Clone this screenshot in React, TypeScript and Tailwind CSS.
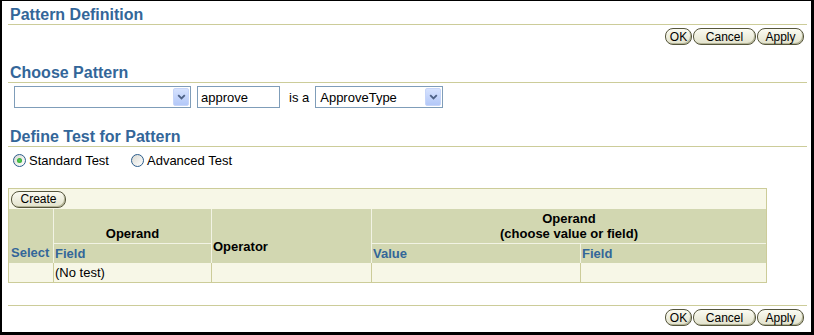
import React from "react";

function Btn({ label, className }: { label: string; className: string }) {
  return (
    <div
      className={
        "h-[17px] flex items-center justify-center rounded-[8px] border border-[#55553c] bg-[linear-gradient(#fbfbf2,#e2e2cc)] text-[12px] leading-none text-black shadow-[inset_-1px_-1px_0_#b4b496] " +
        className
      }
    >
      {label}
    </div>
  );
}

function Heading({ children, className }: { children: React.ReactNode; className: string }) {
  return (
    <div
      className={
        "pl-[2px] text-[16px] leading-[18px] font-bold text-[#336699] border-b border-[#cccc99] " +
        className
      }
    >
      {children}
    </div>
  );
}

function ComboArrow() {
  return (
    <div className="w-[16px] h-[18px] rounded-[2px] border border-[#c6d5f9] bg-[linear-gradient(#d6e2fe,#b3c8f8)] flex items-center justify-center">
      <svg width="9" height="6" viewBox="0 0 9 6">
        <path d="M1.2 1.2 L4.5 4.5 L7.8 1.2" stroke="#4d6185" strokeWidth="1.8" fill="none" />
      </svg>
    </div>
  );
}

function Select({ value, className }: { value: string; className: string }) {
  return (
    <div
      className={
        "h-[22px] border border-[#7f9db9] bg-white flex items-center justify-between pl-[4px] pr-[1px] " +
        className
      }
    >
      <span className="text-[13px] leading-none">{value}</span>
      <ComboArrow />
    </div>
  );
}

function Radio({ checked }: { checked: boolean }) {
  return (
    <div className="w-[13px] h-[13px] rounded-full border border-[#2c5d8c] bg-[linear-gradient(135deg,#d9d9d2,#ffffff)] flex items-center justify-center">
      {checked && (
        <div className="w-[5px] h-[5px] rounded-full bg-[radial-gradient(circle,#5ad25a,#1f9a1f)]" />
      )}
    </div>
  );
}

function ButtonRow() {
  return (
    <div className="flex justify-end gap-[1px] pr-[3px]">
      <Btn label="OK" className="w-[27px]" />
      <Btn label="Cancel" className="w-[63px]" />
      <Btn label="Apply" className="w-[47px]" />
    </div>
  );
}

export default function App() {
  return (
    <div className="w-[814px] h-[335px] bg-white border-black border-t border-l-2 border-r-[3px] border-b-[3px] pl-[6px] pr-[4px] font-['Liberation_Sans',Arial,sans-serif] text-black">
      <Heading className="pt-[5px]">Pattern Definition</Heading>
      <div className="mt-[3px]">
        <ButtonRow />
      </div>

      <Heading className="mt-[19px]">Choose Pattern</Heading>
      <div className="mt-[3px] flex items-center pl-[6px]">
        <Select value="" className="w-[177px]" />
        <div className="ml-[6px] w-[83px] h-[22px] border border-[#7f9db9] bg-white flex items-center pl-[3px] text-[13px] leading-none">
          approve
        </div>
        <span className="ml-[9px] text-[13px] leading-none">is a</span>
        <Select value="ApproveType" className="ml-[6px] w-[128px]" />
      </div>

      <Heading className="mt-[20px]">Define Test for Pattern</Heading>
      <div className="mt-[6px] h-[15px] flex items-center pl-[5px] text-[13px] leading-none">
        <Radio checked={true} />
        <span className="ml-[3px]">Standard Test</span>
        <div className="ml-[22px]">
          <Radio checked={false} />
        </div>
        <span className="ml-[3px]">Advanced Test</span>
      </div>

      <div className="mt-[20px] w-[759px] border-x border-[#cccc99]">
        <div className="h-[21px] bg-[#f7f7e7] border-t border-[#cccc99] flex items-center pl-[2px]">
          <Btn label="Create" className="w-[55px]" />
        </div>
        <div className="grid grid-cols-[44px_157px_159px_208px_185px] grid-rows-[34px_19px] gap-px bg-[#f2f3e4] text-[13px] leading-[15px] font-bold">
          <div className="row-span-2 bg-[#d2d7b1] flex items-end pb-[3px] pl-[2px] text-[#336699]">Select</div>
          <div className="bg-[#d2d7b1] flex items-end justify-center pb-[2px]">Operand</div>
          <div className="row-span-2 bg-[#d2d7b1] flex items-end pb-[9px] pl-[1px]">Operator</div>
          <div className="col-span-2 bg-[#d2d7b1] flex items-end justify-center pb-[2px] text-center">
            Operand
            <br />
            (choose value or field)
          </div>
          <div className="bg-[#d2d7b1] flex items-center pl-[1px] text-[#336699]">Field</div>
          <div className="bg-[#d2d7b1] flex items-center pl-[1px] text-[#336699]">Value</div>
          <div className="bg-[#d2d7b1] flex items-center pl-[1px] text-[#336699]">Field</div>
        </div>
        <div className="grid grid-cols-[44px_157px_159px_208px_185px] gap-x-px bg-[#cccc99] border-b border-[#cccc99] h-[20px] text-[13px] leading-[15px]">
          <div className="bg-[#f7f7e7]" />
          <div className="bg-[#f7f7e7] flex items-center pl-[1px]">(No test)</div>
          <div className="bg-[#f7f7e7]" />
          <div className="bg-[#f7f7e7]" />
          <div className="bg-[#f7f7e7]" />
        </div>
      </div>

      <div className="mt-[22px] border-t border-[#cccc99] pt-[3px]">
        <ButtonRow />
      </div>
    </div>
  );
}
